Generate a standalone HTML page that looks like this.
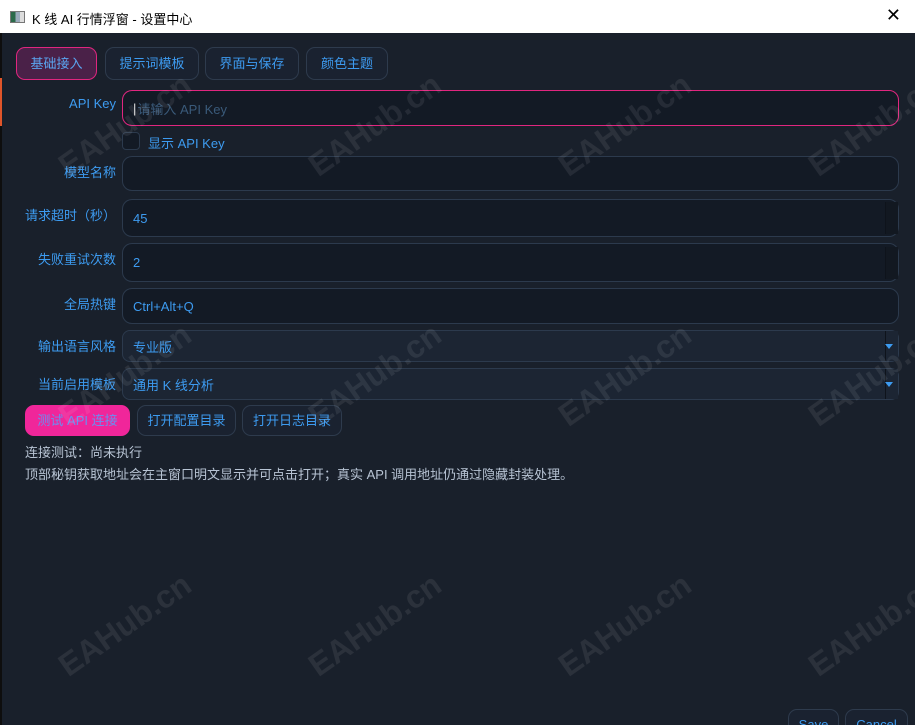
<!DOCTYPE html>
<html style="width:915px;height:725px;overflow:hidden"><head><meta charset="utf-8"><style>
*{box-sizing:border-box;margin:0;padding:0}
body{width:915px;height:725px;overflow:hidden;background:#19202b;font-family:"Liberation Sans","Noto Sans CJK SC",sans-serif;font-size:13px;color:#3d9bf0;position:relative}
.title{position:absolute;left:0;top:0;width:915px;height:33px;background:#fff;color:#000;font-size:13px}
.title .ic{position:absolute;left:10px;top:11px;width:15px;height:12px;border:1px solid #777;background:linear-gradient(90deg,#2a6a4a 0 35%,#9ab 35% 70%,#ddd 70%)}
.title .t{position:absolute;left:32px;top:9px}
.title .x{position:absolute;right:14px;top:5px;font-size:18px}
.abs{position:absolute}
.tab{position:absolute;top:47px;height:33px;border:1px solid #2e3b4d;border-radius:9px;background:#1a2230;color:#3d9bf0;text-align:center;line-height:31px;font-size:13px}
.tab.on{background:#4a2148;border-color:#e0267f;color:#5aa5f0}
.lbl{position:absolute;right:799px;text-align:right;font-size:13px;color:#3d9bf0}
.in{position:absolute;left:122px;width:777px;border:1px solid #2c3a4d;border-radius:10px;background:#131a25;padding-left:10px;font-size:13px;display:flex;align-items:center}
.in.sel{background:#1c2533;border-radius:8px}
.spin{position:absolute;right:0;width:13px;border-left:1px solid #0e131b;background:#121821}
.arr{position:absolute;right:5px;top:50%;margin-top:-2px;width:0;height:0;border-left:4px solid transparent;border-right:4px solid transparent;border-top:5px solid #3d9bf0}
.btn{position:absolute;top:405px;height:31px;border:1px solid #2e3b4d;border-radius:9px;background:#1a2230;text-align:center;line-height:29px;font-size:13px}
.wm{position:absolute;font-family:"Liberation Sans",sans-serif;font-weight:bold;font-size:32px;color:rgba(255,255,255,0.08);transform:translate(-50%,-50%) rotate(-35deg);white-space:nowrap;pointer-events:none}
</style></head><body>
<div class="title"><div class="ic"></div><div class="t">K 线 AI 行情浮窗 - 设置中心</div><div class="x">✕</div></div>
<div class="abs" style="left:0;top:33px;width:2px;height:692px;background:#0e0e0e"></div>
<div class="abs" style="left:0;top:78px;width:2px;height:48px;background:#e0552a"></div>

<div class="tab on" style="left:16px;width:81px">基础接入</div>
<div class="tab" style="left:105px;width:94px">提示词模板</div>
<div class="tab" style="left:205px;width:94px">界面与保存</div>
<div class="tab" style="left:306px;width:82px">颜色主题</div>

<div class="lbl" style="top:96px">API Key</div>
<div class="in" style="top:90px;height:36px;border-color:#e0267f;color:#3a5a7a"><span style="color:#ddd;margin-right:1px">|</span>请输入 API Key</div>
<div class="abs" style="left:122px;top:132px;width:18px;height:18px;border:1px solid #2c3a4d;border-radius:4px;background:#131a25"></div>
<div class="abs" style="left:148px;top:133px">显示 API Key</div>

<div class="lbl" style="top:162px">模型名称</div>
<div class="in" style="top:156px;height:35px"></div>
<div class="lbl" style="top:205px">请求超时（秒）</div>
<div class="in" style="top:199px;height:38px">45<div class="spin" style="top:2px;height:32px"></div></div>
<div class="lbl" style="top:249px">失败重试次数</div>
<div class="in" style="top:243px;height:39px">2<div class="spin" style="top:3px;height:32px"></div></div>
<div class="lbl" style="top:294px">全局热键</div>
<div class="in" style="top:288px;height:36px">Ctrl+Alt+Q</div>
<div class="lbl" style="top:336px">输出语言风格</div>
<div class="in sel" style="top:330px;height:32px">专业版<div class="spin" style="top:0;height:30px;background:#1c2533"><div class="arr"></div></div></div>
<div class="lbl" style="top:374px">当前启用模板</div>
<div class="in sel" style="top:368px;height:32px">通用 K 线分析<div class="spin" style="top:0;height:30px;background:#1c2533"><div class="arr"></div></div></div>

<div class="btn" style="left:25px;width:105px;background:#f0269a;border-color:#f0269a;color:#6b8ef0">测试 API 连接</div>
<div class="btn" style="left:137px;width:99px">打开配置目录</div>
<div class="btn" style="left:242px;width:100px">打开日志目录</div>
<div class="abs" style="left:25px;top:442px;color:#b8c4d4">连接测试：尚未执行</div>
<div class="abs" style="left:25px;top:464px;color:#b8c4d4">顶部秘钥获取地址会在主窗口明文显示并可点击打开；真实 API 调用地址仍通过隐藏封装处理。</div>

<div class="btn" style="left:788px;top:709px;width:51px;height:30px">Save</div>
<div class="btn" style="left:845px;top:709px;width:63px;height:30px">Cancel</div>

<div class="wm" style="left:125px;top:125px">EAHub.cn</div>
<div class="wm" style="left:375px;top:125px">EAHub.cn</div>
<div class="wm" style="left:625px;top:125px">EAHub.cn</div>
<div class="wm" style="left:875px;top:125px">EAHub.cn</div>
<div class="wm" style="left:125px;top:375px">EAHub.cn</div>
<div class="wm" style="left:375px;top:375px">EAHub.cn</div>
<div class="wm" style="left:625px;top:375px">EAHub.cn</div>
<div class="wm" style="left:875px;top:375px">EAHub.cn</div>
<div class="wm" style="left:125px;top:625px">EAHub.cn</div>
<div class="wm" style="left:375px;top:625px">EAHub.cn</div>
<div class="wm" style="left:625px;top:625px">EAHub.cn</div>
<div class="wm" style="left:875px;top:625px">EAHub.cn</div>
</body></html>
